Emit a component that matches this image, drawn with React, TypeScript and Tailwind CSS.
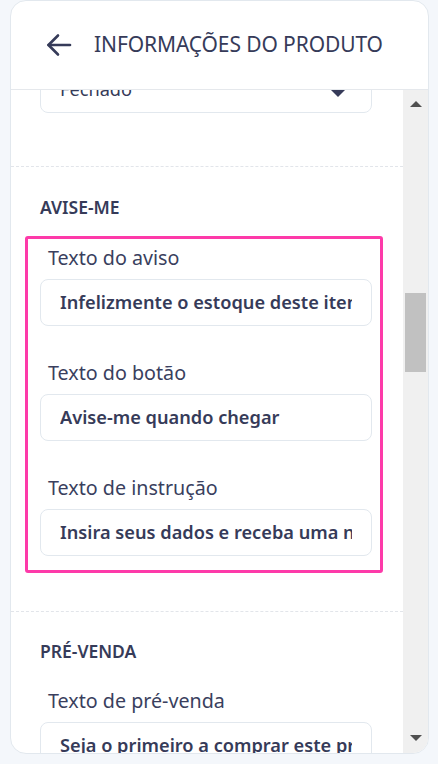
const font = { fontFamily: '"Noto Sans", "Open Sans", sans-serif' }

function Field({ label, value, first = false }: { label: string; value: string; first?: boolean }) {
  return (
    <div className={first ? '' : 'mt-[35px]'}>
      <div className="pl-[8px] text-[19.7px] leading-[24px] text-[#3a3f5e]">{label}</div>
      <div className="mt-[9px] flex h-[47px] items-center rounded-[8px] border border-[#e2e8ee] bg-white px-[19px]">
        <div className="min-w-0 flex-1 overflow-hidden whitespace-nowrap text-[18.2px] font-semibold text-[#363b59]">{value}</div>
      </div>
    </div>
  )
}

export default function App() {
  return (
    <div className="h-[764px] w-[438px] overflow-hidden bg-[#f4f7fb]" style={font}>
      <div className="ml-[10px] flex h-[754px] w-[419px] flex-col overflow-hidden rounded-[16px] border border-[#e2e8ee] bg-white">
        {/* header */}
        <div className="flex h-[89px] shrink-0 items-center gap-[22px] border-b border-[#e5e8ec] pl-[35px]">
          <svg width="26" height="24" viewBox="0 0 26 24" fill="none" stroke="#363b59" strokeWidth="2.6" strokeLinecap="round" strokeLinejoin="round">
            <path d="M24 12H2.5" />
            <path d="M12 2.5 2.5 12l9.5 9.5" />
          </svg>
          <span className="whitespace-nowrap text-[21px] tracking-[-0.1px] text-[#363b59]">INFORMAÇÕES DO PRODUTO</span>
        </div>

        <div className="flex min-h-0 flex-1">
          {/* scrolled content */}
          <div className="min-w-0 flex-1 overflow-hidden">
            <div className="ml-[29px] mt-[-24px] flex h-[47px] w-[332px] items-center justify-between rounded-[8px] border border-[#e2e8ee] pl-[19px] pr-[26px]">
              <span className="text-[18.2px] text-[#363b59]">Fechado</span>
              <span className="mt-[8px] h-0 w-0 border-x-[7px] border-t-[7px] border-x-transparent border-t-[#363b59]" />
            </div>

            <div className="mt-[53px] border-t border-dashed border-[#e2e5ea]" />

            <div className="mt-[28px] pl-[29px] text-[17.5px] font-semibold leading-[24px] text-[#363b59]">AVISE-ME</div>

            <div className="ml-[14px] mt-[17px] w-[358px] rounded-[3px] border-[3px] border-[#fd3aa9] pb-[14px] pl-[12px] pr-[8px] pt-[7px]">
              <Field first label="Texto do aviso" value="Infelizmente o estoque deste item acabou" />
              <Field label="Texto do botão" value="Avise-me quando chegar" />
              <Field label="Texto de instrução" value="Insira seus dados e receba uma notificação" />
            </div>

            <div className="mt-[38px] border-t border-dashed border-[#e2e5ea]" />

            <div className="mt-[27px] pl-[29px] text-[17.5px] font-semibold leading-[24px] text-[#363b59]">PRÉ-VENDA</div>

            <div className="ml-[29px] mt-[26px] w-[332px]">
              <Field first label="Texto de pré-venda" value="Seja o primeiro a comprar este produto" />
            </div>
          </div>

          {/* scrollbar */}
          <div className="flex w-[25px] shrink-0 flex-col items-center bg-[#f0f0f0]">
            <span className="mt-[11px] h-0 w-0 border-x-[6px] border-b-[6px] border-x-transparent border-b-[#505050]" />
            <div className="mt-[186px] h-[79px] w-[21px] bg-[#c1c1c1]" />
            <div className="flex-1" />
            <span className="mb-[12px] h-0 w-0 border-x-[6px] border-t-[6px] border-x-transparent border-t-[#505050]" />
          </div>
        </div>
      </div>
    </div>
  )
}
